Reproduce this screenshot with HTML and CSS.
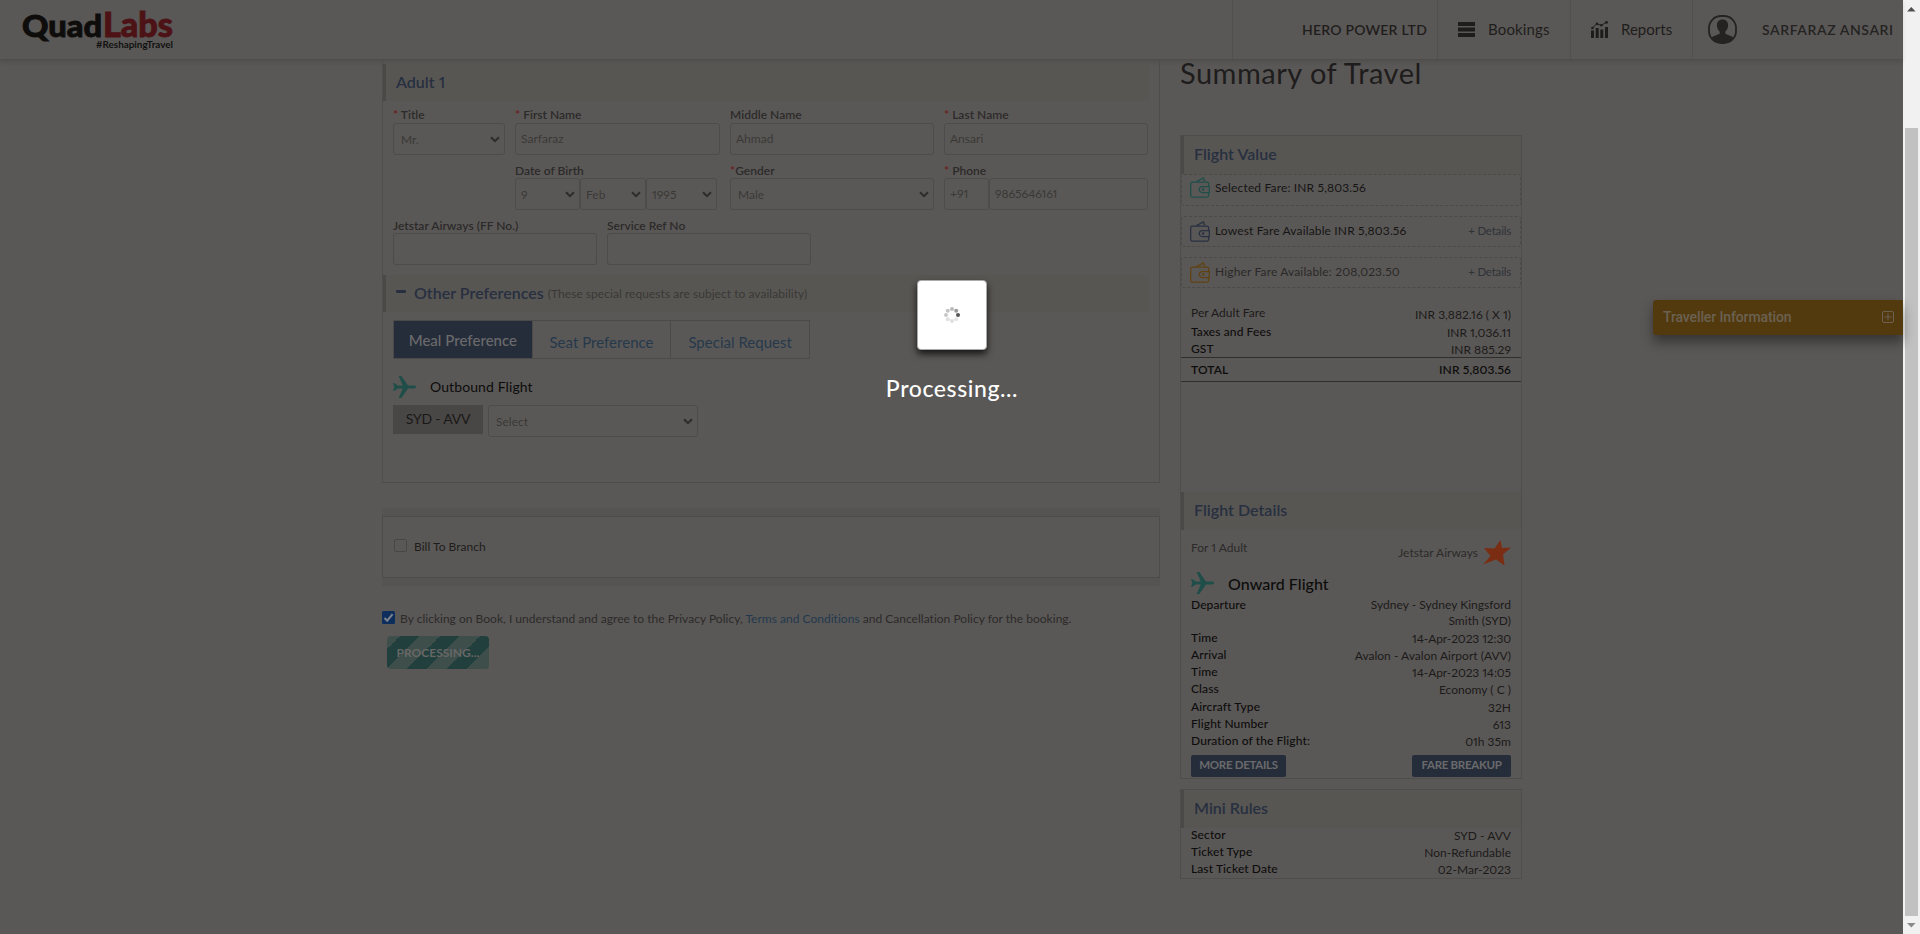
FILE: index.html
```html
<!DOCTYPE html>
<html lang="en">
<head>
<meta charset="utf-8">
<title>QuadLabs Booking</title>
<link rel="stylesheet" href="styles.css">
</head>
<body>
<svg class="defs" width="0" height="0" aria-hidden="true">
  <symbol id="plane" viewBox="0 0 23 22"><path d="M0 7.2h1.8L4.6 9.6h5.2L5.6 0h2.8l6.6 9.6h6.2c2.4 0 2.4 2.8 0 2.8H15L8.4 22H5.6l4.2-9.6H4.6L1.8 14.8H0L1.4 11z"/></symbol>
  <symbol id="wallet" viewBox="0 0 20 21"><g fill="none" stroke="currentColor" stroke-width="1.25"><path d="M18.600 9V6.600a1.600 1.600 0 0 0-1.600-1.600H2.200A1.500 1.500 0 0 0 .7 6.500v12a1.500 1.500 0 0 0 1.500 1.600H17a1.600 1.600 0 0 0 1.600-1.600V16"/><path d="M19.300 9.500h-7a3 3 0 0 0 0 6h7z"/><path d="M6.500 4.600 13.400.9l1.400 3.300"/><circle cx="13.200" cy="12.500" r=".6"/></g></symbol>
  <symbol id="chev" viewBox="0 0 10 7"><path d="M1 1.2 5 5.2 9 1.2" fill="none" stroke="currentColor" stroke-width="2"/></symbol>
</svg>
<div class="screen">
  <div class="page">
    <header class="top">
      <svg class="logo" width="160" height="59" viewBox="0 0 160 59">
        <text class="lq" x="0" y="37" textLength="80" lengthAdjust="spacingAndGlyphs">Quad</text>
        <text class="ll" x="81" y="37" textLength="70" lengthAdjust="spacingAndGlyphs">Labs</text>
        <text class="lt" x="74" y="48" textLength="77" lengthAdjust="spacingAndGlyphs">#ReshapingTravel</text>
      </svg>
      <nav class="nav">
        <div class="cell company"><b>HERO POWER LTD</b></div>
        <div class="cell bookings">
          <svg width="17" height="16" viewBox="0 0 17 16"><path d="M0 0h17v4H0zM0 5.500h17v4H0zM0 11h17v4H0z"/></svg><span>Bookings</span></div>
        <div class="cell reports">
          <svg width="17" height="17" viewBox="0 0 17 17"><path d="M0 9.500h3V17H0zM4.700 7h3v10h-3zM9.300 8.500h3V17h-3zM14 6h3v11h-3z"/><path d="M1.300 7 5.800 2.800 10.300 4.500 15.500 1" fill="none" stroke="currentColor"/><circle cx="1.400" cy="7" r="1.300"/><circle cx="6" cy="2.700" r="1.300"/><circle cx="10.300" cy="4.300" r="1.300"/><circle cx="15.500" cy="1.400" r="1.400"/></svg><span>Reports</span></div>
        <div class="cell user">
          <svg width="29" height="29" viewBox="0 0 29 29"><rect x="1" y="1" width="27" height="27" rx="12" fill="none" stroke="currentColor" stroke-width="1.800"/><path d="M14.500 4.500c-3.600 0-5.600 2.300-5.600 5.800 0 2.700 1.300 5.200 2.800 6.400v2L5 21.500c-1 .5-1.600 1.200-1.900 2C5.500 26.500 9 28 14.500 28s9-1.500 11.400-4.500c-.3-.8-.9-1.500-1.900-2l-6.700-2.800v-2c1.500-1.200 2.800-3.700 2.800-6.400 0-3.500-2-5.800-5.600-5.800z"/></svg><b>SARFARAZ ANSARI</b></div>
      </nav>
    </header>
    <main class="cols">
      <div class="left">
        <section class="traveller">
          <h2 class="sec">Adult 1</h2>
          <div class="form">
            <div class="frow r1">
              <div class="f w112"><label><i>*</i> Title</label><div class="in sel"><span>Mr.</span><svg><use href="#chev"/></svg></div></div>
              <div class="f w205"><label><i>*</i> First Name</label><div class="in">Sarfaraz</div></div>
              <div class="f w204"><label>Middle Name</label><div class="in">Ahmad</div></div>
              <div class="f w204"><label><i>*</i> Last Name</label><div class="in">Ansari</div></div>
            </div>
            <div class="frow r2">
              <div class="f w205"><label>Date of Birth</label><div class="group"><div class="in sel w65"><span>9</span><svg><use href="#chev"/></svg></div><div class="in sel w66"><span>Feb</span><svg><use href="#chev"/></svg></div><div class="in sel w71"><span>1995</span><svg><use href="#chev"/></svg></div></div></div>
              <div class="f w204"><label><i>*</i>Gender</label><div class="in sel lead"><span>Male</span><svg><use href="#chev"/></svg></div></div>
              <div class="f w204"><label><i>*</i> Phone</label><div class="group"><div class="in w45">+91</div><div class="in grow num">9865646161</div></div></div>
            </div>
            <div class="frow r3">
              <div class="f w204"><label>Jetstar Airways (FF No.)</label><div class="in"></div></div>
              <div class="f w204"><label>Service Ref No</label><div class="in"></div></div>
            </div>
          </div>
          <h2 class="sec pref"><em></em><span>Other Preferences</span><small>(These special requests are subject to availability)</small></h2>
          <div class="tabs"><div class="tab on">Meal Preference</div><div class="tab">Seat Preference</div><div class="tab">Special Request</div></div>
          <div class="outbound"><svg class="plane" width="23" height="22"><use href="#plane"/></svg><span>Outbound Flight</span></div>
          <div class="meal"><div class="leg">SYD - AVV</div><div class="in sel lead w210"><span>Select</span><svg><use href="#chev"/></svg></div></div>
        </section>
        <section class="branch"><div class="box"><span class="cb"></span><span>Bill To Branch</span></div></section>
        <div class="agree"><svg width="13" height="13" viewBox="0 0 13 13"><rect width="13" height="13" rx="1.500"/><path d="M2.500 7 5.200 9.700 10.600 3.200" fill="none"/></svg><span>By clicking on Book, I understand and agree to the Privacy Policy, <a>Terms and Conditions</a> and Cancellation Policy for the booking.</span></div>
        <div class="book"><span>PROCESSING...</span></div>
      </div>
      <aside class="right">
        <h1>Summary of Travel</h1>
        <section class="panel">
          <h2 class="sec">Flight Value</h2>
          <div class="fare f1"><svg class="teal"><use href="#wallet"/></svg><span class="k">Selected Fare: INR 5,803.56</span></div>
          <div class="fare"><svg class="navy"><use href="#wallet"/></svg><span class="k">Lowest Fare Available INR 5,803.56</span><span class="det">+ Details</span></div>
          <div class="fare"><svg class="gold"><use href="#wallet"/></svg><span>Higher Fare Available: 208,023.50</span><span class="det">+ Details</span></div>
          <div class="costs">
            <div class="row first"><span>Per Adult Fare</span><span>INR 3,882.16 ( X 1)</span></div>
            <div class="row"><b>Taxes and Fees</b><span>INR 1,036.11</span></div>
            <div class="row"><b>GST</b><span>INR 885.29</span></div>
            <div class="row total"><b>TOTAL</b><b>INR 5,803.56</b></div>
          </div>
          <h2 class="sec fd">Flight Details</h2>
          <div class="carrier"><span>For 1 Adult</span><span class="air">Jetstar Airways<svg width="28" height="26" viewBox="0 0 28 26"><path d="M17.500 0 19 8 28 7.500 20 14.500 21.500 25.500 13 19.500 0 24.500 7.500 16 1 8 11.500 8.500z"/></svg></span></div>
          <div class="onward"><svg class="plane" width="23" height="22"><use href="#plane"/></svg><span>Onward Flight</span></div>
          <div class="facts">
            <div class="row two"><b>Departure</b><span>Sydney - Sydney Kingsford<br>Smith (SYD)</span></div>
            <div class="row"><b>Time</b><span class="num">14-Apr-2023 12:30</span></div>
            <div class="row"><b>Arrival</b><span>Avalon - Avalon Airport (AVV)</span></div>
            <div class="row"><b>Time</b><span class="num">14-Apr-2023 14:05</span></div>
            <div class="row cls"><b>Class</b><span>Economy ( C )</span></div>
            <div class="row"><b>Aircraft Type</b><span>32H</span></div>
            <div class="row"><b>Flight Number</b><span>613</span></div>
            <div class="row"><b>Duration of the Flight:</b><span>01h 35m</span></div>
          </div>
          <div class="btns"><div class="btn">MORE DETAILS</div><div class="btn fb">FARE BREAKUP</div></div>
        </section>
        <section class="panel mini">
          <h2 class="sec">Mini Rules</h2>
          <div class="rules">
            <div class="row"><b>Sector</b><span>SYD - AVV</span></div>
            <div class="row"><b>Ticket Type</b><span>Non-Refundable</span></div>
            <div class="row"><b>Last Ticket Date</b><span>02-Mar-2023</span></div>
          </div>
        </section>
      </aside>
    </main>
    <div class="floating"><span>Traveller Information</span><svg width="12" height="12" viewBox="0 0 12 12"><rect x=".5" y=".5" width="11" height="11" rx="1.500"/><path d="M2.500 6h7M6 2.500v7"/></svg></div>
    <div class="modal">
      <div class="spin"><svg width="18" height="18" viewBox="-9 -9 18 18"><circle cx="6" r="2" fill="#555"/><circle cx="4.200" cy="-4.200" r="2" fill="#999"/><circle cy="-6" r="2" fill="#bbb"/><circle cx="-4.200" cy="-4.200" r="2" fill="#c4c4c4"/><circle cx="-6" r="2" fill="#c8c8c8"/><circle cx="-4.200" cy="4.200" r="2" fill="#e0e0e0"/><circle cy="6" r="2" fill="#e0e0e0"/><circle cx="4.200" cy="4.200" r="2" fill="#e6e6e6"/></svg></div>
      <p>Processing...</p>
    </div>
  </div>
  <div class="scroll"><svg width="9" height="5" viewBox="0 0 9 5"><path d="M0 4.500h8.600L4.300 0z"/></svg><div class="thumb"></div><svg class="dn" width="9" height="5" viewBox="0 0 9 5"><path d="M0 0h8.600L4.300 4.500z"/></svg></div>
</div>
</body>
</html>
```
FILE: styles.css
```css
*{box-sizing:border-box}
body{margin:0;background:#5a5856;font-family:Lato,"Open Sans",sans-serif;font-size:12px;font-variant-numeric:proportional-nums;letter-spacing:.02px;color:#2c2a2a;line-height:17px}
h1,h2,p{margin:0;font-weight:400}
i,em{font-style:normal}
b{font-weight:600}
svg{display:block;fill:currentColor;flex:none}
.defs{position:absolute}
.screen{display:flex;height:934px;overflow:hidden}
.page{position:relative;width:1903px;height:934px;flex:none}
.scroll{width:17px;background:#f1f1f1;display:flex;flex-direction:column;align-items:center;padding-top:7px;color:#505050}
.thumb{width:13px;height:788px;background:#c1c1c1;margin:116px 0 7px}
.dn{color:#8a8a8a}

.top{height:60px;display:flex;justify-content:space-between;border-bottom:1px solid #504e4c;box-shadow:0 2px 4px rgba(0,0,0,.1);white-space:nowrap}
.logo{margin-left:22px}
.logo text{font-family:Lato,sans-serif;letter-spacing:0}
.lq{font-size:31px;font-weight:900;fill:#0e0d0c;stroke:#0e0d0c;stroke-width:.9}
.ll{font-size:34px;font-weight:900;fill:#4d1215;stroke:#4d1215;stroke-width:.9}
.lt{font-size:9.5px;font-weight:700;fill:#111}
.nav{display:flex;color:#1f1d1c;font-size:15px}
.cell{display:flex;align-items:center;border-left:1px solid #52504e;height:59px}
.cell b{font-size:14px;font-weight:600;letter-spacing:.22px;margin-top:-1px}
.company{width:205px;justify-content:flex-end;padding-right:10px}
.bookings{width:133px;padding-left:20px;gap:13px;letter-spacing:.15px}
.reports{width:122px;padding-left:20px;gap:13px}
.user{width:211px;padding-left:15px;gap:25px;color:#242322}
.user b{letter-spacing:.58px}

.cols{display:flex;padding-left:382px;gap:20px}
.left{width:778px}
.traveller{height:423px;border:1px solid #4f4d4b;border-top:0;padding-top:4px}
.sec{height:37px;width:766px;border-left:3px solid #4b4947;background:#585653;padding-left:10px;font-size:16px;font-weight:600;line-height:35px;color:#272f40;letter-spacing:.02px;white-space:nowrap}
.form{padding:10px 0 10px 10px}
.frow{display:flex;gap:10px}
.r2{margin-left:122px}
.r1{height:56px}.r2{height:55px}.r3{height:43px}
.f{display:flex;flex-direction:column}
label{font-weight:600;line-height:8px;height:12px;white-space:nowrap}
.r2 label,.r3 label{height:11px}
label i{color:#6d1d1d}
.in{height:32px;flex:none;border:1px solid #4e4c4a;border-radius:3px;padding-left:5px;line-height:29px;color:#3a3836;white-space:nowrap}
.sel{display:flex;justify-content:space-between;align-items:center;padding-right:4px}
.sel svg{width:10px;height:7px;color:#2e2c2b}
.w112 .in,.lead{padding-left:7px}
.group{display:flex}
.w112{width:112px}.w205{width:205px}.w204{width:204px}.w65{width:65px}.w66{width:66px}.w71{width:71px}.w45{width:45px}.w210{width:210px}
.grow{flex:1}
.pref{display:flex}
.pref em{width:10px;height:3px;border-radius:1px;background:#272f40;margin:15px 8px 0 0}
.pref small{font-size:12px;font-weight:400;color:#3a3836;margin-left:4px;line-height:37px;letter-spacing:.04px}
.tabs{display:flex;width:417px;height:39px;margin:8px 0 0 10px;border:1px solid #4c4a48}
.tab{flex:1;text-align:center;font-size:15px;line-height:42px;color:#26384c;border-left:1px solid #4c4a48}
.tab.on{background:#262d3a;color:#6a6a6c;border:0;line-height:39px;font-weight:500}
.outbound{display:flex;gap:14px;margin:17px 0 0 10px;color:#0d0c0c;font-size:14px;line-height:21px;letter-spacing:.1px}
.plane{color:#1f4e49}
.meal{display:flex;gap:5px;margin:7px 0 0 10px}
.leg{width:90px;height:29px;background:#494745;text-align:center;font-size:14px;line-height:28px;letter-spacing:-.2px;color:#1a1918}
.branch{margin-top:25px;padding:8px 0;background:#565452}
.box{height:62px;background:#5a5856;border:1px solid #4e4c4a;display:flex;align-items:center;padding-left:11px;gap:7px;color:#1f1d1c}
.box span{line-height:18px}
.cb{width:13px;height:13px;border:1px solid #494745;border-radius:2px;margin-top:-3px}
.agree{display:flex;gap:5px;margin-top:25px;white-space:nowrap;color:#2c2a2a}
.agree svg{color:#0d2d5c}
.agree path{stroke:#7b828c;stroke-width:2}
.agree span{line-height:15px}
a{color:#22384e}
.book{width:102px;height:33px;margin:10px 0 0 5px;border-radius:4px;text-align:center;color:#686766;font-size:12px;font-weight:700;line-height:33px;letter-spacing:0;background:linear-gradient(-45deg,#203f3d 25%,#3e4e4b 25%,#3e4e4b 50%,#203f3d 50%,#203f3d 75%,#3e4e4b 75%) 0 -7px/40px 40px}

.right{width:342px}
h1{font-size:29px;line-height:36px;height:80px;margin-top:-5px;font-weight:400;color:#1e1c1c;letter-spacing:.5px;white-space:nowrap}
.panel{border:1px solid #4f4d4b;height:644px}
.right .sec{width:auto}
.panel>.sec{height:38px;padding-left:10px}
.fare{height:31px;border:1px dashed #4c4a48;border-radius:3px;display:flex;align-items:center;padding:0 9px 0 8px;gap:5px;margin-bottom:10px;white-space:nowrap;color:#2a2828}
.fare svg{width:20px;height:21px;margin-top:-1px}
.fare.f1{height:32px}
.fare.f1 svg{margin-top:-5px}
.fare span{margin-top:-3px;letter-spacing:.15px}
.fare .k{color:#161515}
.f1 .k{margin-top:-5px}
.teal{color:#1f4e49}.navy{color:#272f40}.gold{color:#604112}
.fare .det{margin-left:auto;color:#2f3238;font-size:11.5px;letter-spacing:-.2px}
.row{height:17px;padding:0 10px;display:flex;justify-content:space-between;color:#1c1a1a;white-space:nowrap}
.row b{color:#0e0d0d;font-weight:500;line-height:15px;letter-spacing:.1px}
.row>:last-child{text-align:right}
.row span{line-height:17px}
.num{letter-spacing:-.1px}
.costs{margin-top:18px}
.first{height:18px}
.first span:first-child{line-height:14px}
.total{height:25px;margin-top:-1px;border-top:1px solid #302e2d;border-bottom:1px solid #302e2d}
.row.total b{font-weight:600;line-height:24px}
.fd{margin-top:110px}
.carrier{height:42px;padding:10px 10px 0;display:flex;justify-content:space-between;line-height:16px}
.air{display:flex;gap:5px;line-height:26px}
.air svg{color:#7a2d12}
.onward{display:flex;gap:14px;padding-left:10px;height:25px;font-size:16px;font-weight:500;line-height:23px;color:#0d0c0c}
.two{height:33px}.row.two span{line-height:16px}
.cls{height:18px}
.btns{display:flex;justify-content:space-between;padding:5px 10px 0}
.btn{width:95px;height:22px;background:#262d3a;border-radius:2px;text-align:center;color:#6a6a6c;font-size:11.5px;font-weight:700;line-height:20px;letter-spacing:-.3px}
.fb{width:99px}
.mini{height:90px;margin-top:10px}
.rules{margin-top:-1px}

.floating{position:absolute;left:1653px;top:300px;width:250px;height:35px;background:#533a0e;border-radius:3px 0 0 3px;box-shadow:0 7px 12px rgba(0,0,0,.4);display:flex;justify-content:space-between;align-items:center;padding:0 9px 0 10px;color:#6a6152;font-family:Roboto,sans-serif;font-size:14px;font-weight:500;letter-spacing:-.12px}
.floating svg{fill:none;stroke:currentColor;margin-top:-2px}
.modal{position:absolute;left:852px;top:280px;width:200px;display:flex;flex-direction:column;align-items:center}
.spin{width:70px;height:70px;background:#fff;border:1px solid #aaa;border-radius:4px;box-shadow:0 4px 7px rgba(0,0,0,.75);display:flex;align-items:center;justify-content:center}
.modal p{margin-top:23px;font-size:23px;line-height:30px;color:#fff;font-weight:500;letter-spacing:.6px}
```
